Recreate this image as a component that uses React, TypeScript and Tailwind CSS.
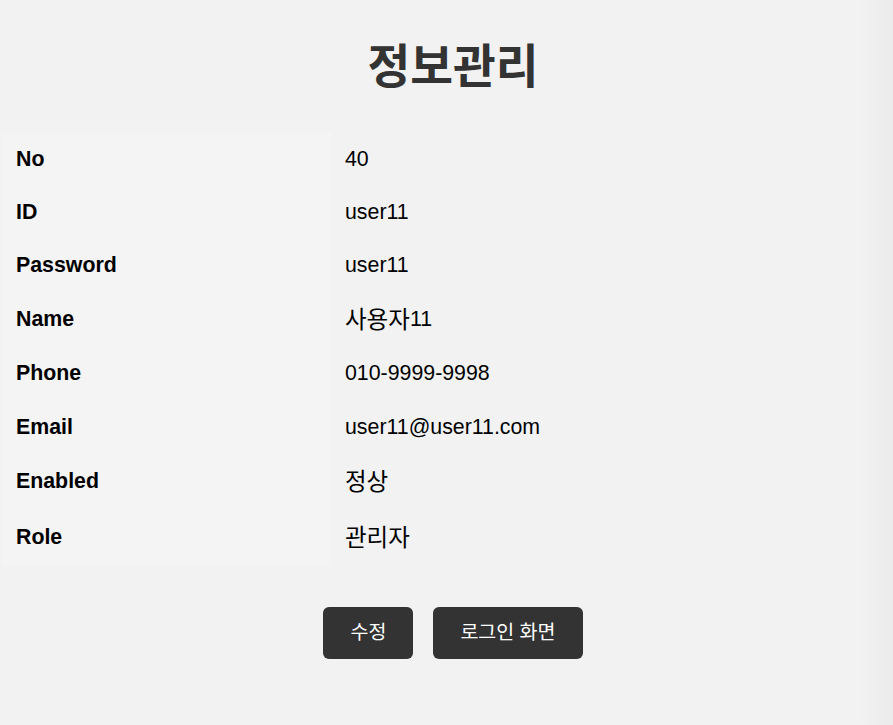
const rows = [
  { label: 'No', value: '40', h: 'h-[53px]' },
  { label: 'ID', value: 'user11', h: 'h-[53px]' },
  { label: 'Password', value: 'user11', h: 'h-[53px]' },
  { label: 'Name', value: '사용자', suffix: '11', h: 'h-[55px]' },
  { label: 'Phone', value: '010-9999-9998', h: 'h-[53px]' },
  { label: 'Email', value: 'user11@user11.com', h: 'h-[54px]' },
  { label: 'Enabled', value: '정상', h: 'h-[55px]' },
  { label: 'Role', value: '관리자', h: 'h-[57px]' },
]

const hangul = /[가-힣]/

export default function App() {
  return (
    <div className="min-h-screen w-full overflow-hidden bg-[linear-gradient(to_right,#f2f2f2_96%,#ebebeb)] font-['Liberation_Sans','Noto_Sans_CJK_KR',sans-serif]">
      <div className="ml-[2px] w-[902px] pb-[66px]">
        {/* Title */}
        <h1 className="pt-[42px] h-[133px] text-center text-[46.5px] leading-[50px] font-bold text-[#333]">
          정보관리
        </h1>

        {/* Info table */}
        <div className="flex flex-col">
          {rows.map((row) => (
            <div key={row.label} className={`flex ${row.h}`}>
              <div className="flex w-[329px] items-center bg-[#f4f4f4] pl-[14px] pt-[1px] text-[21.33px] font-bold text-black">
                {row.label}
              </div>
              <div className="flex flex-1 items-center pl-[14px] pt-[1px] text-[21.33px] text-black">
                {hangul.test(row.value) ? (
                  <span className="text-[23.5px] leading-[28px]">{row.value}</span>
                ) : (
                  row.value
                )}
                {row.suffix}
              </div>
            </div>
          ))}
        </div>

        {/* Buttons */}
        <div className="mt-[41px] flex justify-center gap-5">
          <button className="h-[52px] rounded-md bg-[#333] px-[27px] text-[19.5px] text-white">수정</button>
          <button className="h-[52px] rounded-md bg-[#333] px-[27px] text-[19.5px] text-white">로그인 화면</button>
        </div>
      </div>
    </div>
  )
}
